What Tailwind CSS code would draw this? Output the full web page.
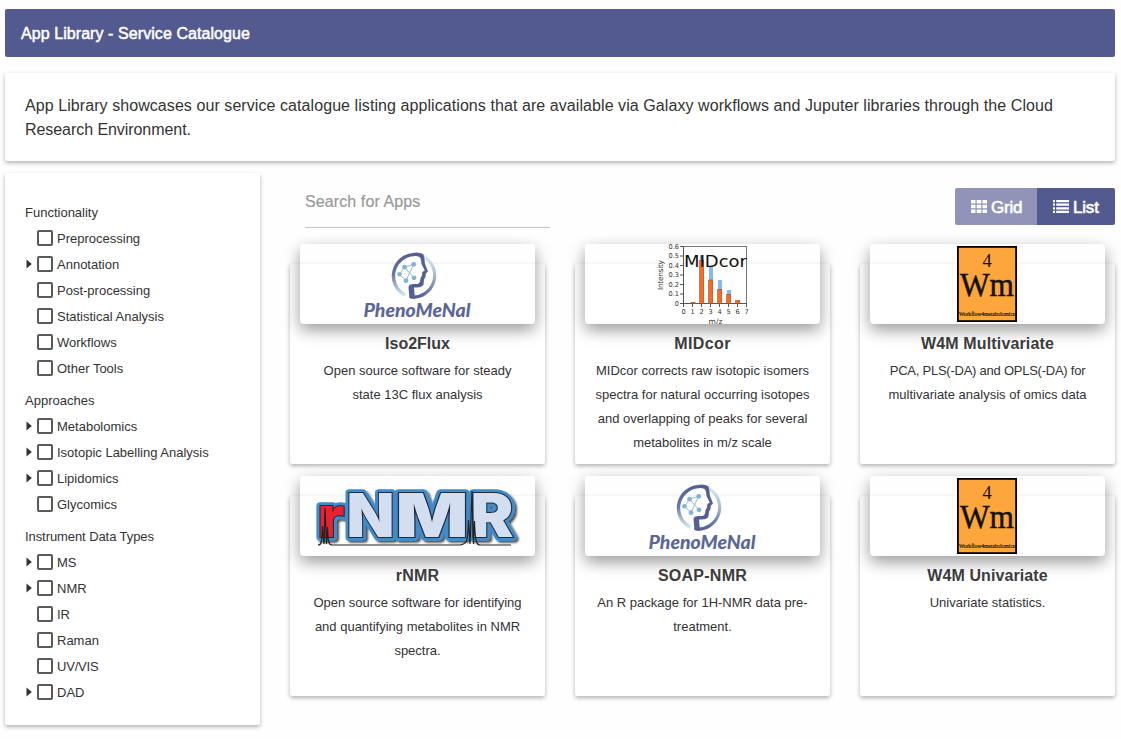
<!DOCTYPE html>
<html lang="en">
<head>
<meta charset="utf-8">
<title>App Library - Service Catalogue</title>
<script src="https://cdn.jsdelivr.net/npm/@tailwindcss/browser@4"></script>
</head>
<body class="bg-[#fefefe] font-['Liberation_Sans',Arial,sans-serif] text-[#333] w-[1121px] h-[739px] overflow-hidden pl-[5px] pr-[6px] pt-[9px]">

<svg width="0" height="0" class="absolute">
  <defs>
    <linearGradient id="ringL" x1="0" y1="0" x2="0" y2="1"><stop offset="0" stop-color="#565f92"/><stop offset=".5" stop-color="#6a78a6"/><stop offset="1" stop-color="#cfe4ee"/></linearGradient>
    <linearGradient id="ringR" x1="0" y1="0" x2="0" y2="1"><stop offset="0" stop-color="#d3e6ef"/><stop offset=".45" stop-color="#a9bdd3"/><stop offset="1" stop-color="#565f92"/></linearGradient>
    <symbol id="pheno" viewBox="0 0 120 80">
      <path d="M44 48.500A21.500 21.500 0 0 1 53 8.600C57 7.700 60 8.300 62 9.500" fill="none" stroke="url(#ringL)" stroke-width="3.400" stroke-linecap="round"/>
      <path d="M64.500 11A21.700 21.700 0 0 1 51 51" fill="none" stroke="url(#ringR)" stroke-width="3.200" stroke-linecap="round"/>
      <path d="M46 10.500C51 6.500 58 6 62.500 8.500C65 10.500 64.500 15 65 18L68 25.500L65.800 27.500L65.500 31L64 33.500L63.500 38.500C62 41.500 58 41.500 54 41.500L55 52.800L49.500 52L48.500 41.500C49 38 51 38 57.500 38C60.500 37 60 34.500 60.500 32L62 29.500L62.300 26L64.800 24.500L61.500 18C61 14 61 12 59.500 11C54 9 50 9 46 10.500Z" fill="#565f92"/>
      <g stroke="#91bcd3" stroke-width="1" fill="none"><path d="M39.500 28.500L44.500 21L53.500 18.500L46 34.500L39.500 28.500M44.500 21L54 32"/></g>
      <g fill="#82b5d0"><circle cx="39.500" cy="28.300" r="2.300"/><circle cx="44.500" cy="21.200" r="2.400"/><circle cx="53.700" cy="18.300" r="2.400"/><circle cx="46" cy="34.700" r="2.400"/><circle cx="54" cy="31.800" r="2.400"/></g>
      <text x="3.500" y="70.500" textLength="107" lengthAdjust="spacingAndGlyphs" font-family="Lato, sans-serif" font-size="18.500" font-weight="900" font-style="italic" fill="#5b6698">PhenoMeNal</text>
    </symbol>
    <symbol id="w4m" viewBox="0 0 60 76">
      <rect x=".9" y=".9" width="58.200" height="74.200" fill="#fca63c" stroke="#000" stroke-width="1.800"/>
      <g font-family="Liberation Serif, serif" fill="#111" text-anchor="middle">
        <text x="30" y="21" font-size="18.500">4</text>
        <text x="30" y="50" font-size="34" textLength="54" lengthAdjust="spacingAndGlyphs" stroke="#111" stroke-width=".5">Wm</text>
        <text x="30" y="69.500" font-size="7" textLength="56" lengthAdjust="spacingAndGlyphs" stroke="#111" stroke-width=".2">Workflow4metabolomics</text>
      </g>
    </symbol>
    <symbol id="arrow" viewBox="0 0 6 10"><path d="M.5 .5L5.800 5L.5 9.500Z" fill="#333"/></symbol>
    <text id="small-r" x="17.500" y="61" font-size="56" textLength="27" lengthAdjust="spacingAndGlyphs">r</text>
    <g id="big-nmr">
      <text x="46.500" y="61" font-size="60" textLength="48" lengthAdjust="spacingAndGlyphs">N</text>
      <text x="95.500" y="61" font-size="60" textLength="73" lengthAdjust="spacingAndGlyphs">M</text>
      <text x="170.500" y="61" font-size="60" textLength="43" lengthAdjust="spacingAndGlyphs">R</text>
    </g>
    <filter id="soft" x="-10%" y="-20%" width="130%" height="160%"><feDropShadow dx="2" dy="2" stdDeviation="1.300" flood-color="#000" flood-opacity=".7"/></filter>
  </defs>
</svg>

<header class="h-12 rounded-[2px] bg-[#535a8f] flex items-center pl-4 pt-[2px] text-white text-[16px] tracking-[0.07px]"><span class="[-webkit-text-stroke:0.5px_white]">App Library - Service Catalogue</span></header>

<section class="mt-4 h-[88px] rounded-[2px] bg-white px-5 pt-[21px] text-[16px] leading-6 whitespace-nowrap tracking-[0.073px] shadow-[0_2px_4px_rgba(0,0,0,0.3)]">
  <p>App Library showcases our service catalogue listing applications that are available via Galaxy workflows and Juputer libraries through the Cloud<br><span class="tracking-[-0.06px]">Research Environment.</span></p>
</section>

<main class="mt-3 flex">
  <aside class="w-[255px] h-[552px] shrink-0 rounded-[2px] bg-white pl-5 pt-[27px] text-[13px] leading-[26px] shadow-[0_2px_4px_rgba(0,0,0,0.3)]">
    <h2>Functionality</h2>
    <ul class="mb-[6px]">
      <li class="flex items-center pl-3"><i class="size-4 border-2 border-[#595959] rounded-[2px] mr-1 mb-[2px]"></i>Preprocessing</li>
      <li class="flex items-center"><svg class="w-[6px] h-[10px] ml-[1px] mr-[5px] mb-[2px]"><use href="#arrow"/></svg><i class="size-4 border-2 border-[#595959] rounded-[2px] mr-1 mb-[2px]"></i>Annotation</li>
      <li class="flex items-center pl-3"><i class="size-4 border-2 border-[#595959] rounded-[2px] mr-1 mb-[2px]"></i>Post-processing</li>
      <li class="flex items-center pl-3"><i class="size-4 border-2 border-[#595959] rounded-[2px] mr-1 mb-[2px]"></i>Statistical Analysis</li>
      <li class="flex items-center pl-3"><i class="size-4 border-2 border-[#595959] rounded-[2px] mr-1 mb-[2px]"></i>Workflows</li>
      <li class="flex items-center pl-3"><i class="size-4 border-2 border-[#595959] rounded-[2px] mr-1 mb-[2px]"></i>Other Tools</li>
    </ul>
    <h2>Approaches</h2>
    <ul class="mb-[6px]">
      <li class="flex items-center"><svg class="w-[6px] h-[10px] ml-[1px] mr-[5px] mb-[2px]"><use href="#arrow"/></svg><i class="size-4 border-2 border-[#595959] rounded-[2px] mr-1 mb-[2px]"></i>Metabolomics</li>
      <li class="flex items-center"><svg class="w-[6px] h-[10px] ml-[1px] mr-[5px] mb-[2px]"><use href="#arrow"/></svg><i class="size-4 border-2 border-[#595959] rounded-[2px] mr-1 mb-[2px]"></i>Isotopic Labelling Analysis</li>
      <li class="flex items-center"><svg class="w-[6px] h-[10px] ml-[1px] mr-[5px] mb-[2px]"><use href="#arrow"/></svg><i class="size-4 border-2 border-[#595959] rounded-[2px] mr-1 mb-[2px]"></i>Lipidomics</li>
      <li class="flex items-center pl-3"><i class="size-4 border-2 border-[#595959] rounded-[2px] mr-1 mb-[2px]"></i>Glycomics</li>
    </ul>
    <h2 class="tracking-[-0.08px]">Instrument Data Types</h2>
    <ul>
      <li class="flex items-center"><svg class="w-[6px] h-[10px] ml-[1px] mr-[5px] mb-[2px]"><use href="#arrow"/></svg><i class="size-4 border-2 border-[#595959] rounded-[2px] mr-1 mb-[2px]"></i>MS</li>
      <li class="flex items-center"><svg class="w-[6px] h-[10px] ml-[1px] mr-[5px] mb-[2px]"><use href="#arrow"/></svg><i class="size-4 border-2 border-[#595959] rounded-[2px] mr-1 mb-[2px]"></i>NMR</li>
      <li class="flex items-center pl-3"><i class="size-4 border-2 border-[#595959] rounded-[2px] mr-1 mb-[2px]"></i>IR</li>
      <li class="flex items-center pl-3"><i class="size-4 border-2 border-[#595959] rounded-[2px] mr-1 mb-[2px]"></i>Raman</li>
      <li class="flex items-center pl-3"><i class="size-4 border-2 border-[#595959] rounded-[2px] mr-1 mb-[2px]"></i><span class="tracking-[-0.2px]">UV/VIS</span></li>
      <li class="flex items-center"><svg class="w-[6px] h-[10px] ml-[1px] mr-[5px] mb-[2px]"><use href="#arrow"/></svg><i class="size-4 border-2 border-[#595959] rounded-[2px] mr-1 mb-[2px]"></i>DAD</li>
    </ul>
  </aside>

  <div class="ml-[30px] w-[825px]">
    <div class="flex justify-between pl-[15px] h-[55px]">
      <div class="w-[245px] border-b border-[#c4c4c4] text-[#999] text-[16px] tracking-[0.1px] leading-[24px] pt-[17px] [-webkit-text-stroke:0.2px_#999]">Search for Apps</div>
      <div class="mt-[15px] h-[37px] flex text-white text-[17px] tracking-[-0.2px] rounded-[2px] overflow-hidden [-webkit-text-stroke:0.6px_white]">
        <div class="w-[82px] bg-[#9194b8] flex items-center pl-4 pt-[2px]">
          <svg class="w-4 h-[13px] mr-1 -mt-[2px]" viewBox="0 0 16 13" fill="#fff"><path d="M0 0h4.500v3.500H0zM5.700 0h4.600v3.500H5.700zM11.500 0H16v3.500h-4.500zM0 4.700h4.500v3.500H0zM5.700 4.700h4.600v3.500H5.700zM11.500 4.700H16v3.500h-4.500zM0 9.400h4.500v3.500H0zM5.700 9.400h4.600v3.500H5.700zM11.500 9.400H16v3.500h-4.500z"/></svg><span>Grid</span>
        </div>
        <div class="w-[78px] bg-[#535a8f] flex items-center pl-4 pt-[2px]">
          <svg class="w-4 h-[13px] mr-1 -mt-[2px]" viewBox="0 0 16 13" fill="#fff"><path d="M0 0h2v2.200H0zM3.200 0H16v2.200H3.200zM0 3.600h2v2.200H0zM3.200 3.600H16v2.200H3.200zM0 7.200h2v2.200H0zM3.200 7.200H16v2.200H3.200zM0 10.800h2V13H0zM3.200 10.800H16V13H3.200z"/></svg><span>List</span>
        </div>
      </div>
    </div>

    <div class="mt-9 grid grid-cols-3 gap-x-[30px] gap-y-8 text-center">
      <article class="h-[200px] rounded-[2px] bg-white px-[10px] shadow-[0_2px_4px_rgba(0,0,0,0.3)]">
        <div class="-mt-5 h-20 rounded-[4px] flex justify-center shadow-[0_6px_16px_rgba(0,0,0,0.4)]"><svg class="w-[120px] h-20"><use href="#pheno" x="2" y="2"/></svg></div>
        <h3 class="mt-2 text-[16px] leading-6 font-bold text-[#3c3c3c]">Iso2Flux</h3>
        <p class="mt-[3px] text-[13px] leading-6">Open source software for steady<br>state 13C flux analysis</p>
      </article>
      <article class="h-[200px] rounded-[2px] bg-white px-[10px] shadow-[0_2px_4px_rgba(0,0,0,0.3)]">
        <div class="-mt-5 h-20 rounded-[4px] flex justify-center shadow-[0_6px_16px_rgba(0,0,0,0.4)]">
          <svg class="w-[235px] h-20" viewBox="0 0 235 80">
            <rect x="98.500" y="2.500" width="63" height="57" fill="none" stroke="#777" stroke-width="1"/>
            <g stroke="#555" stroke-width="1"><path d="M95 2.500h3M95 12h3M95 21.500h3M95 31h3M95 40.500h3M95 50h3M95 59.500h67M98.500 2V63M107.500 60v3M116.500 60v3M125.500 60v3M134.500 60v3M143.500 60v3M152.500 60v3M161.500 60v3"/></g>
            <g fill="#86b9ee"><rect x="115" y="11" width="4" height="10"/><rect x="124" y="22" width="4" height="14"/><rect x="133" y="36" width="4" height="10"/><rect x="142" y="46" width="4" height="5"/></g>
            <g fill="#fb6a20" stroke="#9c4a1c" stroke-width=".6"><rect x="106" y="58.300" width="4" height="1.200"/><rect x="114.700" y="16.500" width="4" height="43"/><rect x="123.700" y="36" width="4" height="23.500"/><rect x="132.700" y="45.500" width="4" height="14"/><rect x="141.700" y="50.500" width="4" height="9"/><rect x="150.700" y="56.500" width="4" height="3"/></g>
            <g font-family="DejaVu Sans, sans-serif" font-size="6.600" fill="#333" text-anchor="end"><text x="94" y="4.900">0.6</text><text x="94" y="14.400">0.5</text><text x="94" y="23.900">0.4</text><text x="94" y="33.400">0.3</text><text x="94" y="42.900">0.2</text><text x="94" y="52.400">0.1</text><text x="94" y="61.900">0</text></g>
            <g font-family="DejaVu Sans, sans-serif" font-size="6.600" fill="#333" text-anchor="middle"><text x="98.500" y="69.500">0</text><text x="107.500" y="69.500">1</text><text x="116.500" y="69.500">2</text><text x="125.500" y="69.500">3</text><text x="134.500" y="69.500">4</text><text x="143.500" y="69.500">5</text><text x="152.500" y="69.500">6</text><text x="161.500" y="69.500">7</text><text x="130.500" y="79.500" font-size="7.500">m/z</text><text transform="translate(78.300 31) rotate(-90)" font-size="7.400" textLength="30">Intensity</text></g>
            <text x="99" y="23" font-family="DejaVu Sans, sans-serif" font-size="15.500" textLength="63" lengthAdjust="spacingAndGlyphs" fill="#111">MIDcor</text>
          </svg>
        </div>
        <h3 class="mt-2 text-[16px] leading-6 font-bold text-[#3c3c3c] tracking-[0.4px]">MIDcor</h3>
        <p class="mt-[3px] text-[13px] leading-6">MIDcor corrects raw isotopic isomers<br>spectra for natural occurring isotopes<br>and overlapping of peaks for several<br>metabolites in m/z scale</p>
      </article>
      <article class="h-[200px] rounded-[2px] bg-white px-[10px] shadow-[0_2px_4px_rgba(0,0,0,0.3)]">
        <div class="-mt-5 h-20 rounded-[4px] flex justify-center items-center pr-[1px] shadow-[0_6px_16px_rgba(0,0,0,0.4)]"><svg class="w-[60px] h-[76px]"><use href="#w4m"/></svg></div>
        <h3 class="mt-2 text-[16px] leading-6 font-bold text-[#3c3c3c] tracking-[0.15px]">W4M Multivariate</h3>
        <p class="mt-[3px] text-[13px] leading-6"><span class="tracking-[-0.24px]">PCA, PLS(-DA) and OPLS(-DA) for</span><br>multivariate analysis of omics data</p>
      </article>
      <article class="h-[200px] rounded-[2px] bg-white px-[10px] shadow-[0_2px_4px_rgba(0,0,0,0.3)]">
        <div class="-mt-5 h-20 rounded-[4px] flex justify-center shadow-[0_6px_16px_rgba(0,0,0,0.4)]">
          <svg class="w-[235px] h-20" viewBox="0 0 235 80" font-family="Inter, sans-serif" font-weight="900">
            <g filter="url(#soft)" fill="#3f8ccb" stroke="#3f8ccb" stroke-width="7.500" stroke-linejoin="round"><use href="#small-r"/><use href="#big-nmr"/></g>
            <g fill="#222b3a" stroke="#222b3a" stroke-width="2"><use href="#small-r"/><use href="#big-nmr"/></g>
            <g fill="#ea2230"><use href="#small-r"/></g>
            <g fill="#d3def1"><use href="#big-nmr"/></g>
            <path d="M18 69C21 69 22 68 22.500 50L24 68L25 32L26.500 68L27.500 51C28 67 29 69 32 69H160C167 68 168 66 168.500 44L170 68L172 15L173.500 68L174.500 45C175 67 177 69 180 69H211" fill="none" stroke="#222" stroke-width="1.200"/>
          </svg>
        </div>
        <h3 class="mt-2 text-[16px] leading-6 font-bold text-[#3c3c3c] tracking-[0.2px]">rNMR</h3>
        <p class="mt-[3px] text-[13px] leading-6">Open source software for identifying<br>and quantifying metabolites in NMR<br>spectra.</p>
      </article>
      <article class="h-[200px] rounded-[2px] bg-white px-[10px] shadow-[0_2px_4px_rgba(0,0,0,0.3)]">
        <div class="-mt-5 h-20 rounded-[4px] flex justify-center shadow-[0_6px_16px_rgba(0,0,0,0.4)]"><svg class="w-[120px] h-20"><use href="#pheno" x="2" y="2"/></svg></div>
        <h3 class="mt-2 text-[16px] leading-6 font-bold text-[#3c3c3c] tracking-[0.25px]">SOAP-NMR</h3>
        <p class="mt-[3px] text-[13px] leading-6">An R package for 1H-NMR data pre-<br>treatment.</p>
      </article>
      <article class="h-[200px] rounded-[2px] bg-white px-[10px] shadow-[0_2px_4px_rgba(0,0,0,0.3)]">
        <div class="-mt-5 h-20 rounded-[4px] flex justify-center items-center pr-[1px] shadow-[0_6px_16px_rgba(0,0,0,0.4)]"><svg class="w-[60px] h-[76px]"><use href="#w4m"/></svg></div>
        <h3 class="mt-2 text-[16px] leading-6 font-bold text-[#3c3c3c] tracking-[0.1px]">W4M Univariate</h3>
        <p class="mt-[3px] text-[13px] leading-6">Univariate statistics.</p>
      </article>
    </div>
  </div>
</main>
</body>
</html>
